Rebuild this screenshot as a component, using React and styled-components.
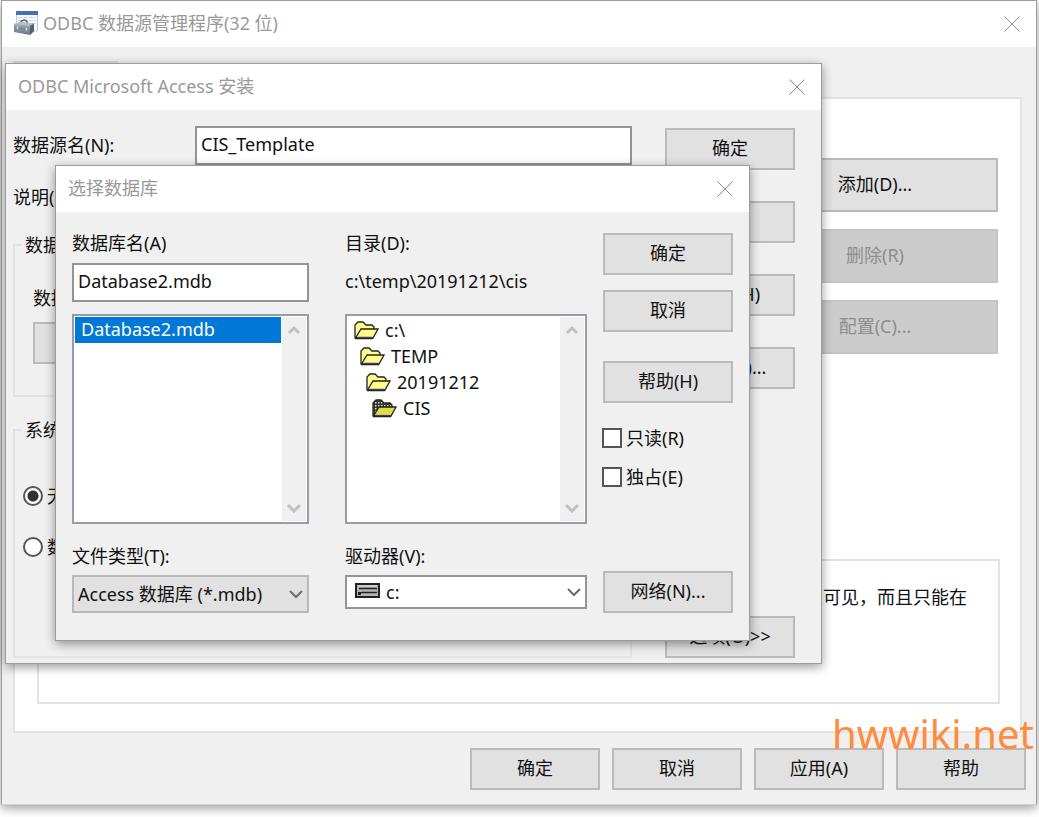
import React from "react";
import styled, { createGlobalStyle } from "styled-components";

const GlobalStyle = createGlobalStyle`
  * {
    box-sizing: border-box;
  }
  body {
    margin: 0;
    background: #ffffff;
    color: #111111;
  }
  body, button, input, select {
    font-family: "Noto Sans", "Noto Sans CJK SC", sans-serif;
    font-size: 18px;
    line-height: 20px;
  }
`;

const Desktop = styled.div`
  position: relative;
  display: flex;
  min-height: 100vh;
  padding: 0 2px 12px 1px;
  overflow: hidden;
`;

const Window = styled.section`
  display: flex;
  flex-direction: column;
  border: 1px solid #9c9c9c;
  background: #f0f0f0;
  box-shadow: 0 3px 10px rgba(0, 0, 0, 0.4);
`;

const MainWindow = styled(Window)`
  flex: 1;
  border-bottom-color: #d0d0d0;
`;

const Dialog = styled(Window)`
  position: absolute;
  left: ${({ $left }) => $left}px;
  right: ${({ $right }) => $right}px;
  top: ${({ $top }) => $top}px;
`;

const TitleBar = styled.header`
  display: flex;
  align-items: center;
  height: 46px;
  padding-left: 12px;
  background: #ffffff;
  color: #999999;

  h1 {
    flex: 1;
    margin: 0;
    padding-bottom: 2px;
    font-size: 18px;
    font-weight: 400;
  }
  svg {
    flex: none;
  }
`;

const AppIcon = styled.svg`
  width: 25px;
  height: 26px;
  margin-right: 4px;
`;

const CloseButton = styled.button`
  display: flex;
  align-items: center;
  justify-content: center;
  width: 49px;
  height: 46px;
  padding: 0;
  border: 0;
  background: none;
`;

const Button = styled.button`
  width: ${({ $width }) => $width || 130}px;
  height: ${({ $height }) => $height || 42}px;
  padding: 0 0 2px;
  border: 2px solid #bababa;
  background: #e1e1e1;
  color: #111111;

  &:disabled {
    border-color: #c4c4c4;
    background: #cccccc;
    color: #8c8c8c;
  }
`;

const MainBody = styled.div`
  display: flex;
  flex: 1;
  flex-direction: column;
  padding: 14px 14px 14px 11px;
`;

const Tab = styled.button`
  width: 105px;
  height: 36px;
  border: 2px solid #dcdcdc;
  border-bottom: 0;
  background: #f4f4f4;
`;

const TabPane = styled.div`
  display: flex;
  flex: 1;
  flex-direction: column;
  align-items: flex-end;
  justify-content: space-between;
  padding: 59px 20px 27px 22px;
  border: 2px solid #e3e3e3;
  background: #ffffff;
`;

const SideButtons = styled.div`
  display: flex;
  flex-direction: column;
  gap: 17px;
  padding-right: 2px;
`;

const InfoBox = styled.p`
  width: 100%;
  height: 145px;
  margin: 0;
  padding: 26px 31px;
  border: 2px solid #e3e3e3;
  text-align: right;
`;

const Footer = styled.footer`
  display: flex;
  justify-content: flex-end;
  gap: 12px;
  margin: 15px -4px 0 0;
`;

const SetupBody = styled.div`
  display: flex;
  gap: 33px;
  padding: 16px 26px 5px 7px;
`;

const SetupForm = styled.div`
  flex: 1;
`;

const FieldRow = styled.div`
  display: grid;
  grid-template-columns: 182px 1fr;
  align-items: center;
  margin-bottom: 13px;

  label {
    padding-bottom: 2px;
  }
`;

const TextInput = styled.input`
  width: 100%;
  height: 39px;
  padding: 0 4px 4px;
  border: 2px solid #949494;
  border-radius: 0;
  background: #ffffff;
  color: #111111;
`;

const Group = styled.fieldset`
  height: ${({ $height }) => $height}px;
  margin: 18px 0 23px;
  padding: 0 7px;
  border: 2px solid #e3e3e3;

  &:last-child {
    margin-bottom: 0;
  }
  legend {
    padding: 0 3px;
  }
`;

const DatabaseField = styled.div`
  display: flex;
  flex-direction: column;
  gap: 14px;
  padding: 33px 10px 0 11px;
`;

const RadioList = styled.div`
  display: flex;
  flex-direction: column;
  gap: 31px;
  padding: 46px 0 0 1px;
`;

const Choice = styled.label`
  display: flex;
  align-items: center;
  gap: 4px;
  height: 20px;

  input {
    appearance: none;
    flex: none;
    width: 20px;
    height: 20px;
    margin: 0;
    border: 2px solid #555555;
    background: #ffffff;
  }
  input[type="radio"] {
    border-radius: 50%;
  }
  input[type="radio"]:checked {
    background: radial-gradient(circle, #333333 5px, #ffffff 6px);
  }
`;

const SetupButtons = styled.div`
  display: flex;
  flex-direction: column;
  gap: 31px;
  padding-top: 2px;

  button:last-child {
    margin-top: auto;
  }
`;

const PickerGrid = styled.div`
  display: grid;
  grid-template-columns: 273fr 258fr 130px;
  padding: 21px 16px 27px;
`;

const Column = styled.div`
  display: flex;
  flex-direction: column;
  margin-right: ${({ $gap }) => $gap}px;
`;

const CurrentPath = styled.p`
  height: 39px;
  margin: 10px 0 0;
  padding-top: 8px;
`;

const FileInput = styled(TextInput)`
  margin-top: 10px;
`;

const ListFrame = styled.div`
  display: flex;
  height: 210px;
  margin: 12px 0 22px;
  padding: 1px;
  border: 2px solid #989ca5;
  background: #ffffff;
`;

const List = styled.ul`
  flex: 1;
  margin: 0;
  padding: 0;
  list-style: none;
`;

const FileItem = styled.li`
  height: 26px;
  margin-right: 1px;
  padding: 2px 6px;
  background: #0078d7;
  color: #ffffff;
`;

const FolderItem = styled.li`
  display: flex;
  align-items: center;
  gap: 6px;
  height: 26px;
  padding-left: ${({ $depth }) => 6 + $depth * 6}px;
`;

const ScrollBar = styled.div`
  display: flex;
  flex-direction: column;
  justify-content: space-between;
  width: 24px;
  background: #f0f0f0;

  button {
    display: flex;
    align-items: center;
    justify-content: center;
    height: 26px;
    padding: 0;
    border: 0;
    background: none;
  }
`;

const SelectBox = styled.div`
  display: flex;
  align-items: center;
  height: ${({ $height }) => $height}px;
  margin-top: 9px;
  padding: 0 4px;
  border: 2px solid ${({ $plain }) => ($plain ? "#949494" : "#b8b8b8")};
  background: ${({ $plain }) => ($plain ? "#ffffff" : "#e1e1e1")};

  select {
    appearance: none;
    flex: 1;
    min-width: 0;
    padding: 0;
    border: 0;
    background: none;
    color: #111111;
  }
  svg {
    flex: none;
  }
`;

const DriveSvg = styled.svg`
  margin: 0 6px 4px 4px;
`;

const PickerButtons = styled.div`
  display: flex;
  flex-direction: column;
  gap: 15px;

  button:nth-child(3) {
    margin-top: 14px;
  }
  button:last-child {
    margin-top: auto;
  }
`;

const Checks = styled.div`
  display: flex;
  flex-direction: column;
  gap: 19px;
  margin: 10px 0 0 -1px;
`;

const Watermark = styled.div`
  position: absolute;
  right: 5px;
  bottom: 58px;
  color: #ff8c3c;
  font-size: 40px;
  line-height: 50px;
`;

function CloseIcon() {
  return (
    <svg width="16" height="16" viewBox="0 0 16 16" stroke="#8c8c8c">
      <path d="M.5 .5 15.500 15.500M15.500 .5 .5 15.500" />
    </svg>
  );
}

function Chevron({ up, color = "#c0c0c0", width = 3 }) {
  return (
    <svg width="14" height="10" viewBox="0 0 14 10" fill="none" stroke={color} strokeWidth={width}>
      <path d={up ? "M2 8 7 3 12 8" : "M1 2 7 8 13 2"} />
    </svg>
  );
}

function OdbcIcon() {
  return (
    <AppIcon viewBox="0 0 25 26">
      <defs>
        <linearGradient id="case" x1="0" y1="0" x2="0" y2="1">
          <stop offset="0" stopColor="#a9b8c1" />
          <stop offset="1" stopColor="#647984" />
        </linearGradient>
      </defs>
      <path d="M2.500 .5H23.500V20H2.500z" fill="#f7f9fc" stroke="#c3cad6" />
      <path d="M2 0H24V4H2z" fill="#466fb4" />
      <path d="M4 6.500H22M4 9.500H22M12 12.500H22" stroke="#c6d0e2" strokeDasharray="4 1.500" />
      <path d="M7 12V10.500Q10 7.500 13 10.500V13" fill="none" stroke="#4c5a62" strokeWidth="1.500" />
      <path d="M0 13 6 11 20 12.500V20L16 24 0 21z" fill="url(#case)" />
      <path d="M0 13 6 11 20 12.500 16 15z" fill="#b2c0c8" />
      <path d="M16 15 20 12.500V20L16 24z" fill="#50636e" />
      <path d="M0 16.500 16 19" stroke="#71858f" />
      <path d="M3.500 15.500V18M12.500 17V19.500" stroke="#d3dde2" strokeWidth="1.500" />
    </AppIcon>
  );
}

function FolderIcon({ current }) {
  return (
    <svg width="25" height="19" viewBox="0 0 25 19">
      <defs>
        <pattern id="dots" width="3" height="3" patternUnits="userSpaceOnUse">
          <path d="M0 0H3V3H0z" fill="#333333" />
          <path d="M0 0H1.500V1.500H0z" fill="#e0e0e0" />
        </pattern>
      </defs>
      <path
        d="M1 17V4L4 1H9L12 4H18L20 6V9"
        fill={current ? "url(#dots)" : "#ffff8c"}
        stroke="#222222"
        strokeWidth="1.300"
      />
      <path
        d="M1.500 17 7 8H24L19 17z"
        fill={current ? "#dede3c" : "#ffff8c"}
        stroke="#222222"
        strokeWidth="1.300"
      />
      <path d="M1 17.500H19" stroke="#222222" strokeWidth="1.500" />
      <path d="M4 15.500H18" stroke="#c4c4b0" />
    </svg>
  );
}

function DriveIcon() {
  return (
    <DriveSvg width="25" height="15" viewBox="0 0 25 15">
      <path d="M1 1H24V14H1z" fill="#b4b4b4" stroke="#222222" strokeWidth="2" />
      <path d="M4 5.500H22M6 9.500H22" stroke="#222222" strokeWidth="1.500" />
      <path d="M3 9H6V12H3z" fill="#222222" />
      <path d="M3 3H22" stroke="#e4e4e4" />
    </DriveSvg>
  );
}

function Title({ icon, children }) {
  return (
    <TitleBar>
      {icon}
      <h1>{children}</h1>
      <CloseButton aria-label="关闭">
        <CloseIcon />
      </CloseButton>
    </TitleBar>
  );
}

function ListBox({ label, children }) {
  return (
    <ListFrame>
      <List role="listbox" aria-label={label}>
        {children}
      </List>
      <ScrollBar>
        <button aria-label="向上">
          <Chevron up />
        </button>
        <button aria-label="向下">
          <Chevron />
        </button>
      </ScrollBar>
    </ListFrame>
  );
}

const folders = ["c:\\", "TEMP", "20191212", "CIS"];

function DataSources() {
  return (
    <MainWindow>
      <Title icon={<OdbcIcon />}>ODBC 数据源管理程序(32 位)</Title>
      <MainBody>
        <Tab aria-label="用户 DSN" />
        <TabPane>
          <SideButtons>
            <Button $width={246} $height={54}>添加(D)...</Button>
            <Button $width={246} $height={54} disabled>删除(R)</Button>
            <Button $width={246} $height={54} disabled>配置(C)...</Button>
          </SideButtons>
          <InfoBox>只对您可见，而且只能在</InfoBox>
        </TabPane>
        <Footer>
          <Button>确定</Button>
          <Button>取消</Button>
          <Button>应用(A)</Button>
          <Button>帮助</Button>
        </Footer>
      </MainBody>
    </MainWindow>
  );
}

function AccessSetup() {
  return (
    <Dialog $left={5} $right={217} $top={63}>
      <Title>ODBC Microsoft Access 安装</Title>
      <SetupBody>
        <SetupForm>
          <FieldRow>
            <label htmlFor="source">数据源名(N):</label>
            <TextInput id="source" defaultValue="CIS_Template" />
          </FieldRow>
          <FieldRow>
            <label htmlFor="description">说明(D):</label>
            <TextInput id="description" />
          </FieldRow>
          <Group $height={162}>
            <legend>数据库</legend>
            <DatabaseField>
              <span>数据库:</span>
              <Button aria-label="选择" />
            </DatabaseField>
          </Group>
          <Group $height={238}>
            <legend>系统数据库</legend>
            <RadioList>
              <Choice>
                <input type="radio" name="system" defaultChecked />
                无(E)
              </Choice>
              <Choice>
                <input type="radio" name="system" />
                数据库
              </Choice>
            </RadioList>
          </Group>
        </SetupForm>
        <SetupButtons>
          <Button>确定</Button>
          <Button aria-label="取消" />
          <Button>帮助(H)</Button>
          <Button>高级(A)...</Button>
          <Button>选项(O)&gt;&gt;</Button>
        </SetupButtons>
      </SetupBody>
    </Dialog>
  );
}

function SelectDatabase() {
  return (
    <Dialog $left={55} $right={289} $top={165}>
      <Title>选择数据库</Title>
      <PickerGrid>
        <Column $gap={36}>
          <label htmlFor="database">数据库名(A)</label>
          <FileInput id="database" defaultValue="Database2.mdb" />
          <ListBox label="数据库名">
            <FileItem role="option" aria-selected="true">Database2.mdb</FileItem>
          </ListBox>
          <label htmlFor="type">文件类型(T):</label>
          <SelectBox $height={38}>
            <select id="type">
              <option>Access 数据库 (*.mdb)</option>
            </select>
            <Chevron color="#6c6c6c" width={2} />
          </SelectBox>
        </Column>
        <Column $gap={16}>
          <span>目录(D):</span>
          <CurrentPath>c:\temp\20191212\cis</CurrentPath>
          <ListBox label="目录">
            {folders.map((name, index) => (
              <FolderItem key={name} role="option" $depth={index}>
                <FolderIcon current={index === folders.length - 1} />
                {name}
              </FolderItem>
            ))}
          </ListBox>
          <label htmlFor="drive">驱动器(V):</label>
          <SelectBox $height={34} $plain>
            <DriveIcon />
            <select id="drive">
              <option>c:</option>
            </select>
            <Chevron color="#6c6c6c" width={2} />
          </SelectBox>
        </Column>
        <PickerButtons>
          <Button>确定</Button>
          <Button>取消</Button>
          <Button>帮助(H)</Button>
          <Checks>
            <Choice>
              <input type="checkbox" />
              只读(R)
            </Choice>
            <Choice>
              <input type="checkbox" />
              独占(E)
            </Choice>
          </Checks>
          <Button>网络(N)...</Button>
        </PickerButtons>
      </PickerGrid>
    </Dialog>
  );
}

function App() {
  return (
    <>
      <GlobalStyle />
      <Desktop>
        <DataSources />
        <AccessSetup />
        <SelectDatabase />
        <Watermark>hwwiki.net</Watermark>
      </Desktop>
    </>
  );
}

export default App;
